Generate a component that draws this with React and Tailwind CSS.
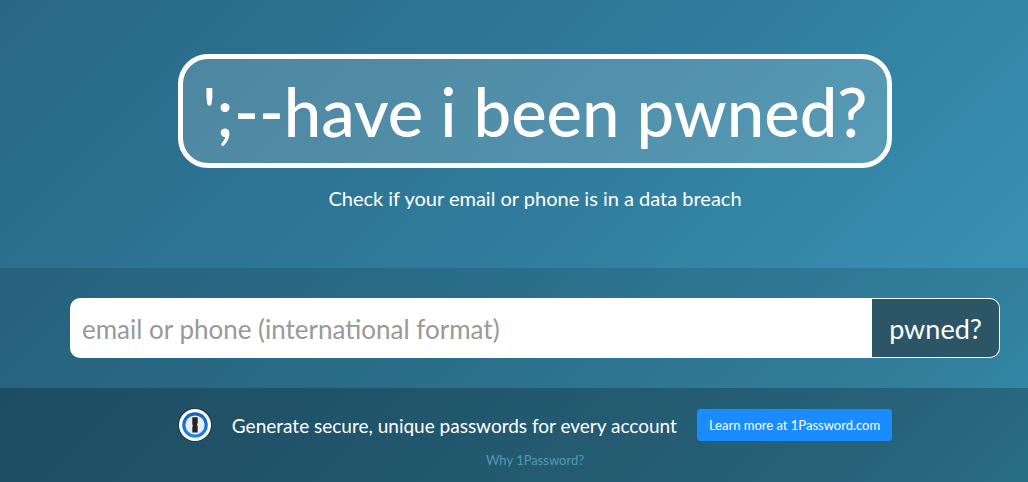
import React from "react";

function OnePasswordLogo() {
  return (
    <svg viewBox="0 0 34 34" className="h-[34px] w-[34px] shrink-0" role="img" aria-label="1Password">
      <defs>
        <linearGradient id="ring" x1="0" y1="0" x2="0" y2="1">
          <stop offset="0" stopColor="#0f62b4" />
          <stop offset="1" stopColor="#1f86ec" />
        </linearGradient>
      </defs>
      <circle cx="17" cy="17" r="17" fill="#23383f" />
      <circle cx="17" cy="17" r="16" fill="#ffffff" />
      <circle cx="17" cy="17" r="12.8" fill="url(#ring)" />
      <circle cx="17" cy="17" r="9.6" fill="#e9edf3" />
      <path d="M14.3 9.3h5.4v6l-.5.6v1.6l.5.6v6.4h-5.4v-5.4l.4-.6v-1.6l-.4-.6z" fill="#222428" />
    </svg>
  );
}

export default function App() {
  return (
    <div className="min-h-screen bg-[linear-gradient(135deg,#296787_0%,#307c9c_50%,#3991b2_86%,#3ca1c3_100%)] font-[Lato,'Liberation_Sans',sans-serif] text-white">
      <header className="flex flex-col items-center pt-[54px] pr-7 pb-14 pl-[70px]">
        <h1 className="rounded-[30px] border-5 border-white bg-white/17 px-5 text-[67px] leading-[104px] font-medium whitespace-nowrap">
          ';--have i been pwned?
        </h1>
        <p className="mt-4 text-[20px] leading-7">Check if your email or phone is in a data breach</p>
      </header>
      <form className="bg-black/12 py-[30px] pr-7 pl-[70px]" onSubmit={(e) => e.preventDefault()}>
        <div className="flex h-[60px]">
          <input
            type="text"
            aria-label="email or phone (international format)"
            placeholder="email or phone (international format)"
            className="min-w-0 flex-1 rounded-l-[10px] bg-white px-3 pt-0.5 text-[26px] text-gray-700 outline-none placeholder:text-[#999999]"
          />
          <button type="submit" className="w-32 rounded-r-[10px] border border-l-0 border-white bg-[#2c5665] pt-0.5 text-[27px]">
            pwned?
          </button>
        </div>
      </form>
      <section className="flex flex-col items-center bg-black/32 pt-5 pr-7 pb-3 pl-[70px]">
        <div className="flex items-center">
          <OnePasswordLogo />
          <p className="ml-5 pt-0.5 text-[19px] whitespace-nowrap">Generate secure, unique passwords for every account</p>
          <a href="#learn-more" className="ml-5 rounded-[4px] bg-[#1a8cff] px-3 text-[13px] leading-8 whitespace-nowrap">
            Learn more at 1Password.com
          </a>
        </div>
        <a href="#why" className="mt-2 text-[13px] leading-5 text-[#5498b8]">Why 1Password?</a>
      </section>
    </div>
  );
}
